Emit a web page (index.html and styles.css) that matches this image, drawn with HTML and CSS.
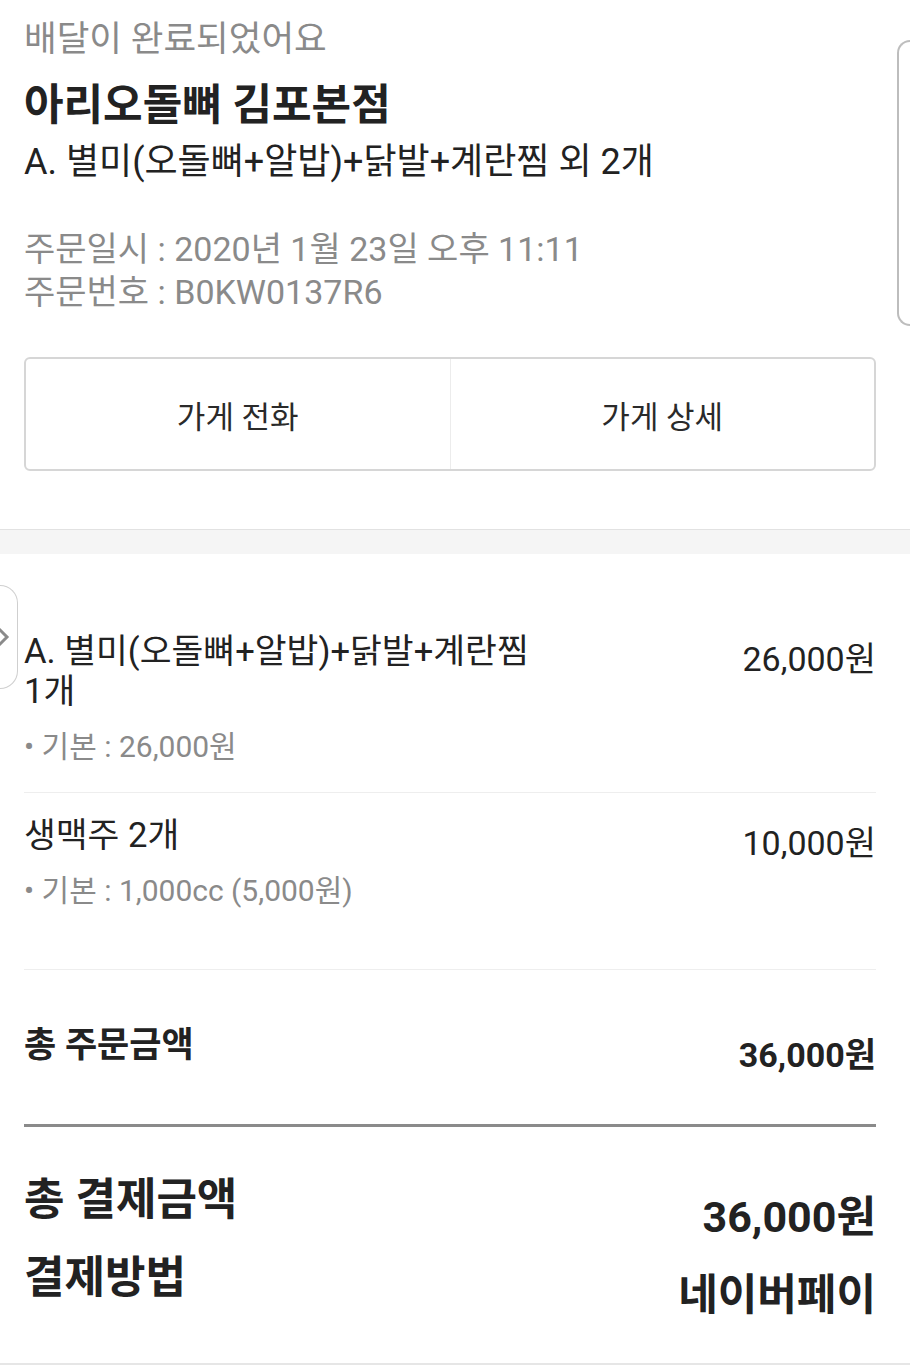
FILE: index.html
```html
<!DOCTYPE html>
<html lang="ko">
<head>
    <meta charset="UTF-8">
    <title>주문상세</title>
    <link rel="stylesheet" href="styles.css">
</head>
<body>
    <div class="page">
        <div class="summary">
            <div class="status">배달이 완료되었어요</div>
            <div class="store">아리오돌뼈 김포본점</div>
            <div class="menu">A. 별미(오돌뼈+알밥)+닭발+계란찜 외 2개</div>
            <div class="meta">
                <div>주문일시 : 2020년 1월 23일 오후 11:11</div>
                <div>주문번호 : B0KW0137R6</div>
            </div>
            <div class="actions">
                <div class="action">가게 전화</div>
                <div class="action">가게 상세</div>
            </div>
        </div>
        <div class="band"></div>
        <div class="items">
            <div class="item">
                <div class="itemInfo">
                    <div class="itemName">A. 별미(오돌뼈+알밥)+닭발+계란찜<br>1개</div>
                    <div class="itemOpt">• 기본 : 26,000원</div>
                </div>
                <div class="itemPrice">26,000원</div>
            </div>
            <div class="item">
                <div class="itemInfo">
                    <div class="itemName">생맥주 2개</div>
                    <div class="itemOpt">• 기본 : 1,000cc (5,000원)</div>
                </div>
                <div class="itemPrice">10,000원</div>
            </div>
        </div>
        <div class="orderTotal">
            <div class="totalLabel">총 주문금액</div>
            <div class="totalValue">36,000원</div>
        </div>
        <div class="payment">
            <div class="payRow">
                <div class="payLabel">총 결제금액</div>
                <div class="payValue">36,000원</div>
            </div>
            <div class="payRow">
                <div class="payLabel">결제방법</div>
                <div class="payValue">네이버페이</div>
            </div>
        </div>
    </div>
    <div class="edgeRight"></div>
    <div class="edgeLeft">
        <svg width="12" height="24" viewBox="0 0 12 24"><path d="M-1 4 L7 12 L-1 20" fill="none" stroke="#8a8a8a" stroke-width="3"/></svg>
    </div>
</body>
</html>
```

FILE: styles.css
```css
*{
    margin: 0px;
    padding: 0px;
    box-sizing: border-box;
}
html{
    overflow: hidden;
}
body{
    font-family: Roboto, "Noto Sans CJK KR", sans-serif;
    color: #222;
    background: #fff;
    width: 910px;
}
.summary{
    padding: 17px 34px 58px 24px;
}
.status{
    font-size: 35.5px;
    line-height: 44px;
    color: #8a8a8a;
}
.store{
    margin-top: 18px;
    font-size: 43px;
    line-height: 52px;
    font-weight: 700;
    color: #222;
}
.menu{
    margin-top: 9px;
    font-size: 36px;
    line-height: 44px;
}
.meta{
    margin-top: 44px;
    font-size: 34px;
    line-height: 43px;
    color: #8a8a8a;
}
.actions{
    margin-top: 43px;
    height: 114px;
    display: flex;
    border: 2px solid #d6d6d6;
    border-radius: 6px;
}
.action{
    flex: 1;
    display: flex;
    align-items: center;
    justify-content: center;
    font-size: 31px;
    color: #2a2a2a;
}
.action + .action{
    border-left: 1px solid #ececec;
}
.band{
    height: 25px;
    border-top: 1px solid #e2e2e2;
    background: #f5f5f5;
}
.items{
    margin: 0px 34px 0px 24px;
    padding: 55px 0px 33px 0px;
    border-bottom: 1px solid #eeeeee;
}
.item{
    display: flex;
    justify-content: space-between;
    padding: 22px 0px 25px 0px;
}
.item + .item{
    border-top: 1px solid #eeeeee;
}
.itemName{
    font-size: 34.6px;
    line-height: 40px;
}
.itemOpt{
    margin-top: 16px;
    font-size: 30px;
    line-height: 40px;
    color: #8a8a8a;
}
.itemPrice{
    padding-top: 8px;
    font-size: 34px;
    line-height: 40px;
}
.orderTotal{
    display: flex;
    justify-content: space-between;
    margin: 0px 34px 0px 24px;
    height: 157px;
    padding-top: 54px;
    border-bottom: 3px solid #8a8a8a;
}
.totalLabel{
    font-size: 35px;
    line-height: 44px;
    font-weight: 700;
}
.totalValue{
    padding-top: 9px;
    font-size: 34px;
    line-height: 44px;
    font-weight: 700;
}
.payment{
    padding: 45px 34px 0px 24px;
    height: 238px;
    border-bottom: 2px solid #e6e6e6;
    display: flex;
    flex-direction: column;
    gap: 22px;
}
.payRow{
    display: flex;
    justify-content: space-between;
    height: 56px;
}
.payLabel{
    font-size: 44px;
    line-height: 56px;
    font-weight: 700;
}
.payValue{
    padding-top: 17px;
    font-size: 43px;
    line-height: 56px;
    font-weight: 700;
}
.edgeRight{
    position: absolute;
    top: 40px;
    left: 897px;
    width: 13px;
    height: 286px;
    border: 2px solid #bdbdbd;
    border-right: none;
    border-radius: 22px 0px 0px 22px;
}
.edgeLeft{
    position: absolute;
    top: 585px;
    left: 0px;
    width: 18px;
    height: 104px;
    border: 1px solid #cfcfcf;
    border-left: none;
    border-radius: 0px 22px 22px 0px;
    background: #fff;
    display: flex;
    align-items: center;
    justify-content: flex-start;
}
```
